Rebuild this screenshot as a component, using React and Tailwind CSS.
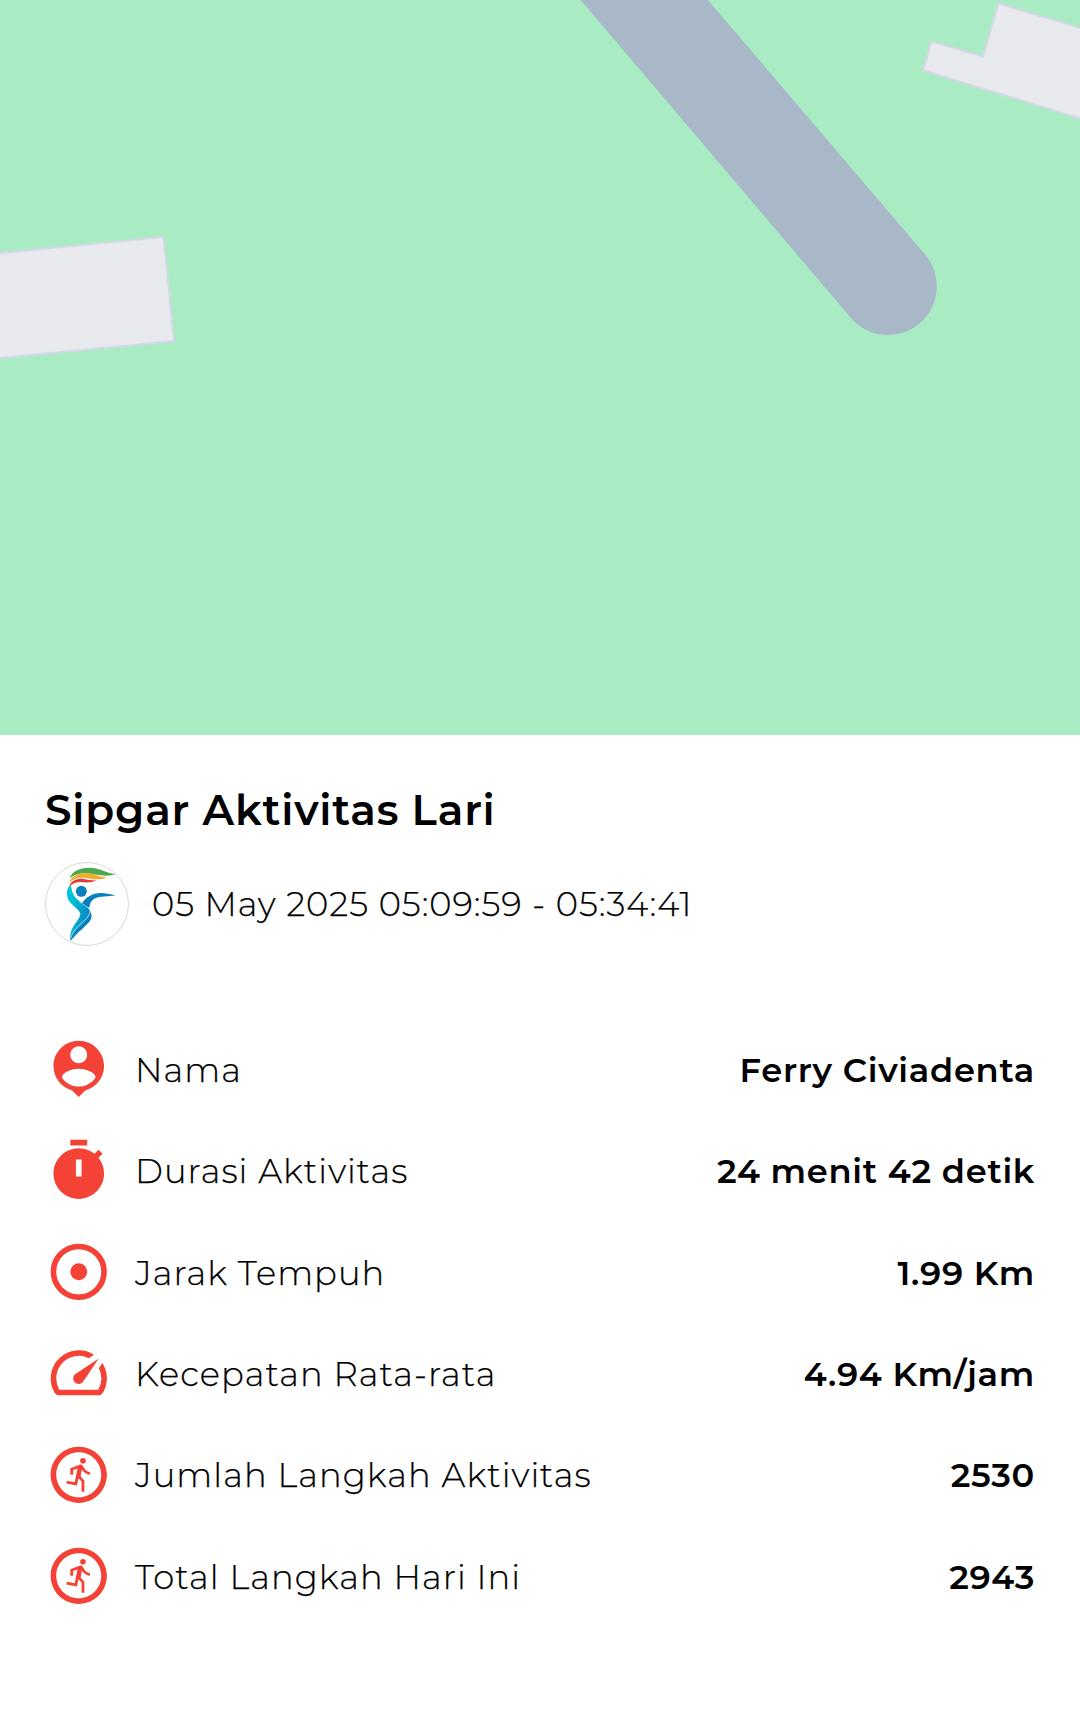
import React from "react";
import { MdOutlineRunCircle, MdOutlineSpeed } from "react-icons/md";

function PersonPinIcon(props) {
  return (
    <svg viewBox="0 0 24 24" fill="currentColor" {...props}>
      <path d="M12 2c-4.97 0-9 4.03-9 9 0 4.17 2.84 7.67 6.69 8.69L12 22l2.31-2.31C18.16 18.67 21 15.17 21 11c0-4.97-4.03-9-9-9zm0 2c1.66 0 3 1.34 3 3s-1.34 3-3 3-3-1.34-3-3 1.34-3 3-3zm0 14.3c-2.5 0-4.71-1.28-6-3.22.03-1.99 4-3.08 6-3.08 1.99 0 5.97 1.09 6 3.08-1.29 1.94-3.5 3.22-6 3.22z" />
    </svg>
  );
}

function StopwatchIcon(props) {
  return (
    <svg viewBox="0 0 24 24" fill="currentColor" fillRule="evenodd" {...props}>
      <path d="M9 1h6v2H9zM19.03 7.39l1.42-1.42c-.43-.51-.9-.99-1.41-1.41l-1.42 1.42C16.07 4.74 14.12 4 12 4c-4.97 0-9 4.03-9 9s4.02 9 9 9 9-4.03 9-9c0-2.12-.74-4.07-1.97-5.61zM11 8h2v6h-2z" />
    </svg>
  );
}

function TargetIcon(props) {
  return (
    <svg viewBox="0 0 24 24" {...props}>
      <circle cx="12" cy="12" r="9" fill="none" stroke="currentColor" strokeWidth="2" />
      <circle cx="12" cy="12" r="3" fill="currentColor" />
    </svg>
  );
}

function Logo(props) {
  return (
    <svg viewBox="45 36 252 252" {...props}>
      <defs>
        <linearGradient id="body" gradientUnits="userSpaceOnUse" x1="118" y1="190" x2="176" y2="200">
          <stop offset="0" stopColor="#00c4d8" />
          <stop offset="1" stopColor="#0a86c2" />
        </linearGradient>
      </defs>
      <circle cx="171" cy="162" r="124.5" fill="#fff" stroke="#b5b5b5" strokeWidth="1.6" />
      <path d="M119 86C126 62 150 52 183 53C212 55 232 70 258 72C236 81 210 76 184 71C155 68 134 72 119 86Z" fill="#4caa4c" />
      <path d="M118 99C122 79 144 69 170 69C193 71 208 81 230 83C210 91 190 88 168 84C146 82 128 87 118 99Z" fill="#f3ac2c" />
      <path d="M119 110C120 93 138 86 158 86C176 89 186 92 201 91C184 99 168 98 152 96C136 96 126 101 119 110Z" fill="#e13b35" />
      <path d="M118 108C107 120 109 145 122 159C134 172 148 180 151 191C150 207 132 220 124 242C119 256 120 264 121 272C125 250 140 238 156 221C168 209 181 197 180 181C173 165 148 157 135 141C126 129 125 116 123 108Z" fill="url(#body)" />
      <path d="M155 162C165 143 188 128 216 129C232 130 244 134 257 136C235 141 210 137 193 146C184 151 179 160 178 174C172 169 164 167 155 162Z" fill="#087fbd" />
      <path d="M180 182C184 190 186 200 183 208C172 227 142 246 121 274C124 250 140 238 156 221C168 209 179 199 180 182Z" fill="#087fbd" />
      <path d="M147 155C161 164 174 170 180 181C180 200 161 213 147 226C133 239 126 251 122 264" fill="none" stroke="#e6f6fb" strokeWidth="1.8" />
      <circle cx="154" cy="124" r="16.5" fill="#087fbd" />
    </svg>
  );
}

const rows = [
  { icon: PersonPinIcon, label: "Nama", value: "Ferry Civiadenta" },
  { icon: StopwatchIcon, label: "Durasi Aktivitas", value: "24 menit 42 detik" },
  { icon: TargetIcon, label: "Jarak Tempuh", value: "1.99 Km" },
  { icon: MdOutlineSpeed, label: "Kecepatan Rata-rata", value: "4.94 Km/jam" },
  { icon: MdOutlineRunCircle, label: "Jumlah Langkah Aktivitas", value: "2530" },
  { icon: MdOutlineRunCircle, label: "Total Langkah Hari Ini", value: "2943" },
];

export default function App() {
  return (
    <div className="flex h-[1732px] w-[1080px] flex-col overflow-hidden bg-white font-['Montserrat','Inter',sans-serif] text-[33.75px] tracking-[0.7px] text-black">
      <svg className="block h-[735px] w-full shrink-0 bg-[#a9ebc3]" viewBox="0 0 1080 735">
        <path
          className="blur-[0.6px]"
          d="M572.100 -10L699.400 -10L925.500 255A48.800 48.800 0 0 1 850.500 317.500Z"
          fill="#a9b8c9"
        />
        <g fill="#e7e9ed" stroke="#d6d7e8" strokeWidth="2">
          <path d="M-10 254L163.500 237L174 341L-10 359Z" />
          <path d="M1100 34L998.500 3.500L983 56.500L931.500 41.500L923 70.500L1100 124.300Z" />
        </g>
      </svg>
      <main className="flex flex-col pt-[49px] pr-[45px] pl-[45px]">
        <h1 className="text-[42.2px] leading-[52px] font-semibold tracking-[0.8px]">Sipgar Aktivitas Lari</h1>
        <div className="mt-[26px] flex items-center">
          <Logo className="size-[84px]" />
          <p className="ml-[23px] leading-[42px] font-light tracking-[0.97px] [-webkit-text-stroke:0.25px_black]">
            05 May 2025 05:09:59 - 05:34:41
          </p>
        </div>
        <div className="mt-[72.500px] flex flex-col">
          {rows.map(({ icon: Icon, label, value }) => (
            <div key={label} className="flex h-[101.3px] items-center">
              <Icon className="size-[67.5px] shrink-0 text-[#f44336]" />
              <span className="ml-[22.500px] pt-[2px] leading-[42px] font-light tracking-[1.07px] [-webkit-text-stroke:0.25px_black]">
                {label}
              </span>
              <span className="ml-auto pt-[2px] leading-[42px] font-semibold">{value}</span>
            </div>
          ))}
        </div>
      </main>
    </div>
  );
}
